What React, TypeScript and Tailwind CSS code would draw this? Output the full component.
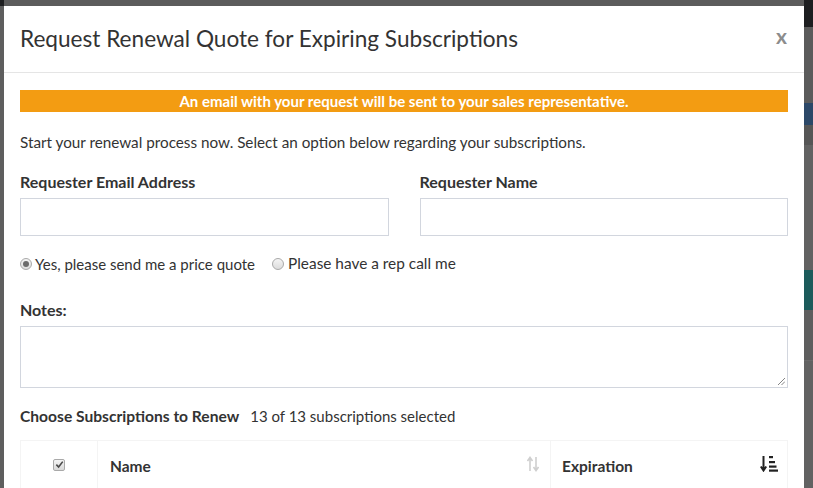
import React from 'react';

function Radio({ checked }: { checked?: boolean }) {
  return (
    <span className="inline-flex h-[12px] w-[12px] items-center justify-center rounded-full border border-[#a9a9a9] bg-gradient-to-b from-[#f4f4f4] to-[#dcdcdc]">
      {checked && <span className="h-[6px] w-[6px] rounded-full bg-[#6b6b6b]" />}
    </span>
  );
}

function Checkbox() {
  return (
    <span className="inline-flex h-[12px] w-[12px] items-center justify-center rounded-[2px] border border-[#a9a9a9] bg-gradient-to-b from-[#f4f4f4] to-[#d8d8d8]">
      <svg viewBox="0 0 10 10" className="h-[9px] w-[9px]">
        <path d="M1.5 5.2 L4 7.8 L8.6 1.8" fill="none" stroke="#4a4a4a" strokeWidth="1.8" />
      </svg>
    </span>
  );
}

function SortBoth() {
  return (
    <svg viewBox="0 0 12 16" className="h-[16px] w-[12px]">
      <path d="M3 15 V2 M0.5 5 L3 1.5 L5.5 5" fill="none" stroke="#cfcfcf" strokeWidth="1.6" />
      <path d="M9 1 V14 M6.5 11 L9 14.5 L11.5 11" fill="none" stroke="#cfcfcf" strokeWidth="1.6" />
    </svg>
  );
}

function SortAsc() {
  return (
    <svg viewBox="0 0 18 17" className="h-[17px] w-[18px]">
      <path d="M3.5 1 V15 M0.8 11.5 L3.5 15.5 L6.2 11.5" fill="none" stroke="#222" strokeWidth="2" />
      <rect x="9" y="1" width="4" height="2.2" fill="#222" />
      <rect x="9" y="6" width="6" height="2.2" fill="#222" />
      <rect x="9" y="10.5" width="7.5" height="2.2" fill="#222" />
      <rect x="9" y="14.5" width="9" height="2.2" fill="#222" />
    </svg>
  );
}

export default function App() {
  return (
    <div className="flex h-[488px] w-[813px] overflow-hidden bg-[#5c5c5c] font-['Lato',sans-serif] text-[#333]">
      <div className="flex w-[4px] shrink-0 flex-col">
        <div className="h-[6px] shrink-0 bg-[#1d1e20]" />
        <div className="flex-1 bg-[#5e5e5e]" />
      </div>

      <div className="mt-[6px] flex w-[800px] shrink-0 flex-col overflow-hidden bg-white">
        <div className="flex h-[67px] shrink-0 items-center justify-between border-b border-[#e5e5e5] px-4">
          <h4 className="text-[22.6px] leading-[30px] text-[#333]">Request Renewal Quote for Expiring Subscriptions</h4>
          <span className="mb-[6px] mr-[1px] text-[21px] font-bold text-[#8c8c8c]">x</span>
        </div>

        <div className="shrink-0 px-4 pt-[17px]">
          <div className="flex h-[22px] items-center justify-center bg-[#f39c12] text-[15px] font-bold text-white">
            An email with your request will be sent to your sales representative.
          </div>

          <p className="mt-[19px] text-[15.25px] leading-[22px]">
            Start your renewal process now. Select an option below regarding your subscriptions.
          </p>

          <div className="mt-[18px] grid grid-cols-2 gap-x-[31px]">
            <div>
              <div className="text-[16px] font-bold leading-[22px]">Requester Email Address</div>
              <div className="mt-[5px] h-[38px] border border-[#d2d6de]" />
            </div>
            <div>
              <div className="text-[16px] font-bold leading-[22px]">Requester Name</div>
              <div className="mt-[5px] h-[38px] border border-[#d2d6de]" />
            </div>
          </div>

          <div className="mt-[17px] flex h-[22px] items-center text-[15px]">
            <span className="mr-[3px] flex items-center"><Radio checked /></span>
            <span>Yes, please send me a price quote</span>
            <span className="ml-[17px] mr-[4px] flex items-center"><Radio /></span>
            <span className="text-[15.4px]">Please have a rep call me</span>
          </div>

          <div className="mt-[24px] text-[16px] font-bold leading-[22px]">Notes:</div>
          <div className="relative mt-[5px] h-[62px] border border-[#d2d6de]">
            <svg viewBox="0 0 8 8" className="absolute bottom-[2px] right-[2px] h-[8px] w-[8px]">
              <path d="M1 8 L8 1 M4.5 8 L8 4.5" stroke="#777" strokeWidth="0.9" />
            </svg>
          </div>

          <div className="mt-[17px] flex items-baseline leading-[22px]">
            <span className="text-[15.6px] font-bold">Choose Subscriptions to Renew</span>
            <span className="ml-[11px] text-[15px]">13 of 13 subscriptions selected</span>
          </div>

          <div className="mt-[13px] flex h-[52px] border border-b-0 border-[#f4f4f4] text-[15.5px] font-bold">
            <div className="flex w-[77px] items-center justify-center border-r border-[#f4f4f4] pb-[4px]">
              <Checkbox />
            </div>
            <div className="flex w-[453px] items-center justify-between border-r border-[#f4f4f4] pl-[12px] pr-[11px]">
              <span>Name</span>
              <span className="mb-[6px]"><SortBoth /></span>
            </div>
            <div className="flex flex-1 items-center justify-between pl-[11px] pr-[9px]">
              <span>Expiration</span>
              <span className="mb-[6px]"><SortAsc /></span>
            </div>
          </div>
        </div>
      </div>

      <div className="flex flex-1 flex-col">
        <div className="h-[27px] shrink-0 bg-[#1d1e20]" />
        <div className="h-[76px] shrink-0 bg-[#5b5b5b]" />
        <div className="h-[22px] shrink-0 bg-[#2c4868]" />
        <div className="h-[20px] shrink-0 bg-[#565656]" />
        <div className="h-[125px] shrink-0 bg-[#626262]" />
        <div className="h-[40px] shrink-0 bg-[#1c5b5b]" />
        <div className="h-[50px] shrink-0 bg-[#5e5e5e]" />
        <div className="flex-1 border-t border-[#6a6a6a] bg-[#626262]" />
      </div>
    </div>
  );
}
